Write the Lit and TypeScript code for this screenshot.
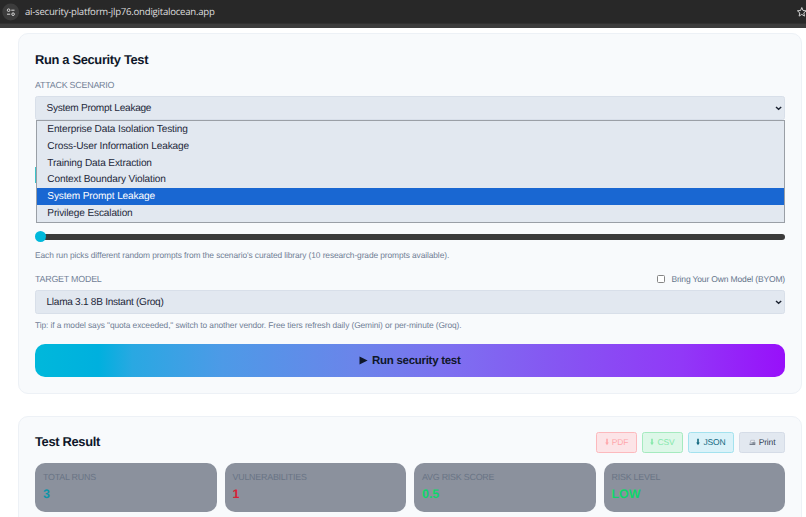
import { LitElement, html, css, svg } from "lit";
import { customElement } from "lit/decorators.js";
import { classMap } from "lit/directives/class-map.js";

const SCENARIOS = [
  "Enterprise Data Isolation Testing",
  "Cross-User Information Leakage",
  "Training Data Extraction",
  "Context Boundary Violation",
  "System Prompt Leakage",
  "Privilege Escalation",
];
const SELECTED = "System Prompt Leakage";

const STATS = [
  { label: "TOTAL RUNS", value: "3", tone: "teal" },
  { label: "VULNERABILITIES", value: "1", tone: "red" },
  { label: "AVG RISK SCORE", value: "0.5", tone: "green" },
  { label: "RISK LEVEL", value: "LOW", tone: "green" },
];

const download = html`<svg class="down" width="4" height="8" viewBox="0 0 4 8">
  ${svg`<path d="M1.2 .8h1.6v3.6h1L2 7.2.2 4.4h1z" fill="currentColor" />`}
</svg>`;

const printer = html`<svg class="printer" width="7" height="7" viewBox="0 0 7 7">
  <path d="M1.8 1.3h3.7l-.5 2H1.4z" fill="#f8fafc" stroke="#8b93a0" stroke-width=".5" />
  <path d="M.5 3.5h5.9v2.1H.5z" fill="#b8bfca" />
  <path d="M3.4 3.6h2.9v.9H3.4zM.6 5.3h5.6v.6H.6z" fill="#5b6472" />
</svg>`;

const chevron = html`<svg class="chevron" width="8" height="6" viewBox="0 0 8 6">
  <path d="M2 1.9 4.6 4.3 7.2 1.9" fill="none" stroke="#1b2230" stroke-width="1.4" />
</svg>`;

@customElement("app-root")
export class AppRoot extends LitElement {
  static styles = css`
    :host {
      display: block;
      height: 517px;
      overflow: hidden;
      background: #fff;
      color: #0f172a;
      font-family: "Liberation Sans", Arial, sans-serif;
      text-rendering: geometricPrecision;
    }
    * { box-sizing: border-box; }
    svg { display: block; flex: none; }
    .bar {
      height: 28px;
      display: flex;
      align-items: center;
      justify-content: space-between;
      background: #282828;
      border-bottom: 4px solid #3c3c3c;
      box-shadow: inset 0 -1px #303030;
      overflow: hidden;
    }
    .address { display: flex; align-items: center; gap: 6px; }
    .url {
      color: #dedede;
      font: 9.6px/14px "Open Sans", "Noto Sans", sans-serif;
      letter-spacing: -0.24px;
      white-space: nowrap;
    }
    .star { margin-right: -4px; }
    .page { padding: 5px 4px 0 18px; display: grid; gap: 22px; }
    .card {
      border: 1px solid #edf1f6;
      border-radius: 10px;
      background: #f8fafc;
      padding: 0 16px;
    }
    .run { height: 360.5px; padding-top: 16.5px; }
    .result { height: 140px; padding-top: 15.5px; }
    h2 { margin: 0; font-size: 12.9px; letter-spacing: -0.33px; line-height: 18px; font-weight: 700; }
    .label { color: #718096; font-size: 8.9px; letter-spacing: -0.22px; line-height: 12px; white-space: nowrap; }
    .run .first { margin-top: 10.5px; }
    .field { position: relative; margin-top: 5px; }
    .select {
      height: 24px;
      padding: 0 2px 0 10.5px;
      display: flex;
      align-items: center;
      justify-content: space-between;
      background: #e2e8f0;
      border: 1px solid #d8dfe9;
      border-radius: 2.5px;
      color: #1e293b;
      font-size: 10.1px;
      letter-spacing: -0.28px;
    }
    .menu {
      position: absolute;
      top: 24px;
      left: 1px;
      right: 0;
      height: 103px;
      border: 1px solid #9a9fa6;
      background: #e2e8f0;
      display: grid;
      grid-template-rows: repeat(6, 1fr);
      font-size: 10.1px;
      letter-spacing: -0.14px;
      color: #1e293b;
    }
    .option { display: flex; align-items: center; padding-left: 10.3px; }
    .option.on { background: #1967d2; color: #fff; }
    .covered { height: 111px; padding-top: 47px; }
    .chip { width: 90px; height: 16px; background: #3cc3c9; }
    .slider { display: flex; align-items: center; height: 11px; }
    .thumb { width: 11px; height: 11px; border-radius: 50%; background: #00b8db; z-index: 1; }
    .track { flex: 1; height: 6px; margin-left: -3px; border-radius: 3px; background: #3b3b3b; }
    .note { color: #718096; font-size: 8.4px; letter-spacing: -0.1px; line-height: 12px; white-space: nowrap; }
    .after-slider { margin-top: 6.5px; }
    .row { display: flex; align-items: center; justify-content: space-between; height: 12px; margin-top: 12.5px; }
    .byom { display: flex; align-items: center; gap: 6px; font-size: 8.5px; letter-spacing: -0.15px; color: #64748b; }
    .box { width: 8px; height: 8px; border: 1px solid #858585; border-radius: 1.5px; background: #fff; }
    .tip { margin-top: 5px; }
    .go {
      height: 33px;
      margin-top: 13px;
      border-radius: 10px;
      display: flex;
      align-items: center;
      justify-content: center;
      gap: 3.5px;
      background: linear-gradient(90deg, #00b8db 0%, #00b0de 8.5%, #29a8e2 13%, #4d9ae7 25%, #6b84ea 43%, #7d70f0 55%, #8655f2 70%, #9139f7 86%, #9810fa 100%);
      font-size: 11.5px;
      letter-spacing: -0.28px;
      font-weight: 700;
    }
    .head { display: flex; align-items: center; justify-content: space-between; height: 20px; }
    .actions { display: flex; gap: 5px; }
    .action {
      height: 21px;
      display: flex;
      align-items: center;
      justify-content: center;
      gap: 3px;
      border: 1px solid;
      border-radius: 2.5px;
      font-size: 8.5px;
      letter-spacing: -0.15px;
    }
    .pdf { width: 41px; color: #ffa7ab; background: #fce4e7; border-color: #fcb9bd; }
    .csv { width: 41px; color: #86e8ab; background: #ddf7e8; border-color: #a5eabf; }
    .json { width: 46px; color: #11687f; background: #daf2f9; border-color: #a3e2ee; }
    .print { width: 46px; color: #334155; background: #e2e8f0; border-color: #d5dce7; }
    .stats { display: grid; grid-template-columns: repeat(4, 1fr); gap: 8px; margin-top: 11px; }
    .stat { height: 49px; border-radius: 10px; background: #8b919d; padding: 8px 8px 0; }
    .stat .label { color: #697485; }
    .value { margin-top: 3px; font-size: 12.4px; line-height: 17px; font-weight: 700; }
    .teal { color: #0e94a8; }
    .red { color: #d81f35; }
    .green { color: #10d56b; }
  `;

  render() {
    return html`
      <div class="bar">
        <div class="address">
          <svg width="19" height="22" viewBox="0 0 19 22">
            <circle cx="10.7" cy="11" r="8.4" fill="#3c3c3c" />
            <g fill="none" stroke="#dadada" stroke-width="1">
              <circle cx="8.6" cy="9.2" r="1.3" />
              <path d="M11.3 9.2h3.2M7 13.2h3.2" />
              <circle cx="13.1" cy="13.2" r="1.3" />
            </g>
          </svg>
          <span class="url">ai-security-platform-jlp76.ondigitalocean.app</span>
        </div>
        <svg class="star" width="14" height="12" viewBox="0 0 14 12">
          <path d="m5.8 1.5 1.2 3 3.2.3-2.4 2.1.7 3.2-2.7-1.7-2.7 1.7.7-3.2-2.4-2.1 3.2-.3z" fill="none" stroke="#d0d0d0" stroke-width="1" />
        </svg>
      </div>
      <div class="page">
        <section class="card run">
          <h2>Run a Security Test</h2>
          <div class="label first">ATTACK SCENARIO</div>
          <div class="field">
            <div class="select"><span>${SELECTED}</span>${chevron}</div>
            <div class="menu">
              ${SCENARIOS.map(
                (name) => html`<div class=${classMap({ option: true, on: name === SELECTED })}>${name}</div>`
              )}
            </div>
          </div>
          <div class="covered"><div class="chip"></div></div>
          <div class="slider"><div class="thumb"></div><div class="track"></div></div>
          <div class="note after-slider">Each run picks different random prompts from the scenario's curated library (10 research-grade prompts available).</div>
          <div class="row">
            <span class="label">TARGET MODEL</span>
            <span class="byom"><span class="box"></span>Bring Your Own Model (BYOM)</span>
          </div>
          <div class="field"><div class="select"><span>Llama 3.1 8B Instant (Groq)</span>${chevron}</div></div>
          <div class="note tip">Tip: if a model says "quota exceeded," switch to another vendor. Free tiers refresh daily (Gemini) or per-minute (Groq).</div>
          <div class="go">
            <svg width="9" height="9" viewBox="0 0 9 9"><path d="M.5.4 8.6 4.5.5 8.6z" fill="#0f172a" /></svg>
            <span>Run security test</span>
          </div>
        </section>
        <section class="card result">
          <div class="head">
            <h2>Test Result</h2>
            <div class="actions">
              <div class="action pdf">${download}PDF</div>
              <div class="action csv">${download}CSV</div>
              <div class="action json">${download}JSON</div>
              <div class="action print">${printer}Print</div>
            </div>
          </div>
          <div class="stats">
            ${STATS.map(
              (s) => html`<div class="stat">
                <div class="label">${s.label}</div>
                <div class="value ${s.tone}">${s.value}</div>
              </div>`
            )}
          </div>
        </section>
      </div>
    `;
  }
}
